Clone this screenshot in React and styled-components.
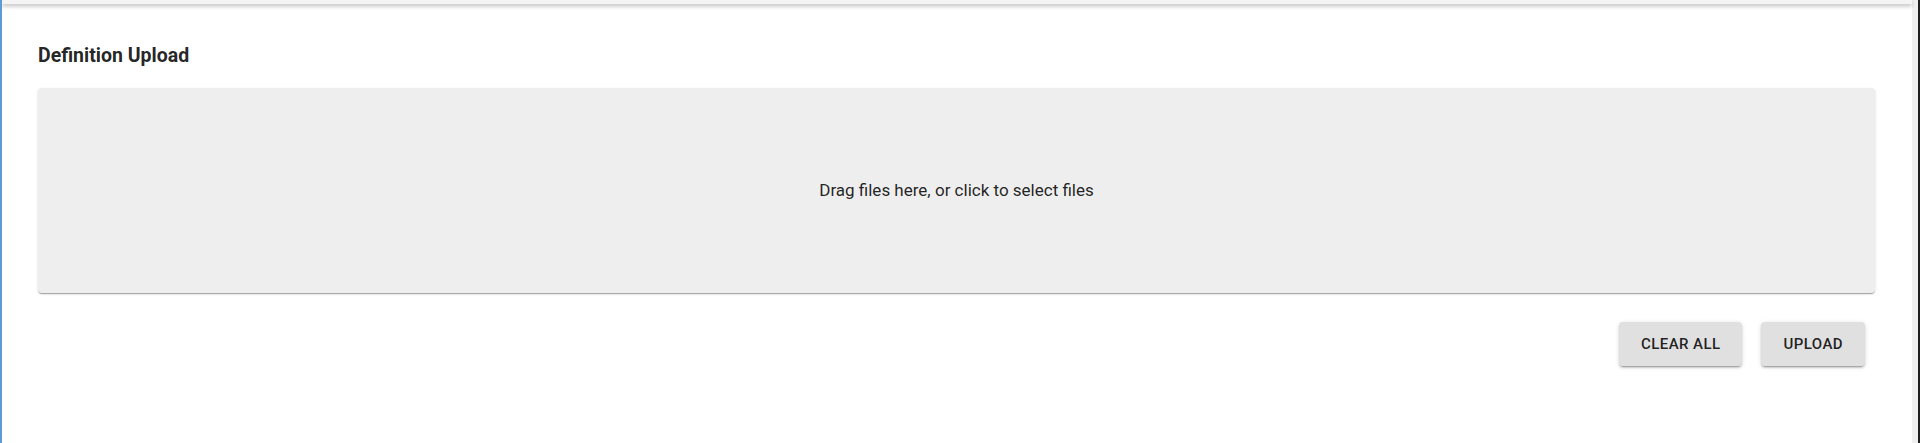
import React from 'react';
import styled, { createGlobalStyle } from 'styled-components';

const GlobalStyle = createGlobalStyle`
  html, body {
    margin: 0;
    padding: 0;
    background: #ffffff;
    font-family: Roboto, "Helvetica Neue", Arial, sans-serif;
  }
`;

const Frame = styled.div`
  display: flex;
  height: 443px;
  overflow: hidden;
  border-left: 2px solid #5a9bd8;
`;

const Main = styled.div`
  flex: 1;
  display: flex;
  flex-direction: column;
  background: #ffffff;
`;

const TopShade = styled.div`
  height: 4px;
  background: #f4f4f4;
  box-shadow: 0 2px 4px rgba(0, 0, 0, 0.28);
  position: relative;
  z-index: 1;
`;

const Gutter = styled.div`
  width: 6px;
  background: #efefef;
  border-right: 2px solid #1e1e1e;
`;

const Panel = styled.section`
  display: flex;
  flex-direction: column;
  padding: 36px 37px 0 36px;
`;

const Title = styled.h6`
  margin: 0 0 16px;
  font-size: 19.5px;
  font-weight: 700;
  line-height: 32px;
  color: rgba(0, 0, 0, 0.87);
`;

const DropZone = styled.div`
  height: 205px;
  display: flex;
  align-items: center;
  justify-content: center;
  background: #eeeeee;
  border-radius: 4px;
  cursor: pointer;
  box-shadow: 0px 2px 1px -1px rgba(0, 0, 0, 0.2),
    0px 1px 1px 0px rgba(0, 0, 0, 0.14), 0px 1px 3px 0px rgba(0, 0, 0, 0.12);
`;

const DropText = styled.p`
  margin: 0;
  font-size: 17px;
  line-height: 1.5;
  color: rgba(0, 0, 0, 0.87);
`;

const Actions = styled.div`
  display: flex;
  justify-content: flex-end;
  gap: 19px;
  margin-top: 29px;
  padding-right: 10px;
`;

const Button = styled.button`
  font-family: Roboto, "Helvetica Neue", Arial, sans-serif;
  font-size: 15px;
  font-weight: 500;
  line-height: 26px;
  letter-spacing: 0.02857em;
  text-transform: uppercase;
  padding: 9px 22px;
  min-width: 64px;
  border: 0;
  border-radius: 4px;
  background: #e0e0e0;
  color: rgba(0, 0, 0, 0.87);
  cursor: pointer;
  box-shadow: 0px 3px 1px -2px rgba(0, 0, 0, 0.2),
    0px 2px 2px 0px rgba(0, 0, 0, 0.14), 0px 1px 5px 0px rgba(0, 0, 0, 0.12);
  &:hover {
    background: #d5d5d5;
  }
`;

export default function App() {
  return (
    <>
      <GlobalStyle />
      <Frame>
        <Main>
          <TopShade />
          <Panel>
            <Title>Definition Upload</Title>
            <DropZone>
              <DropText>Drag files here, or click to select files</DropText>
            </DropZone>
            <Actions>
              <Button>Clear All</Button>
              <Button>Upload</Button>
            </Actions>
          </Panel>
        </Main>
        <Gutter />
      </Frame>
    </>
  );
}
